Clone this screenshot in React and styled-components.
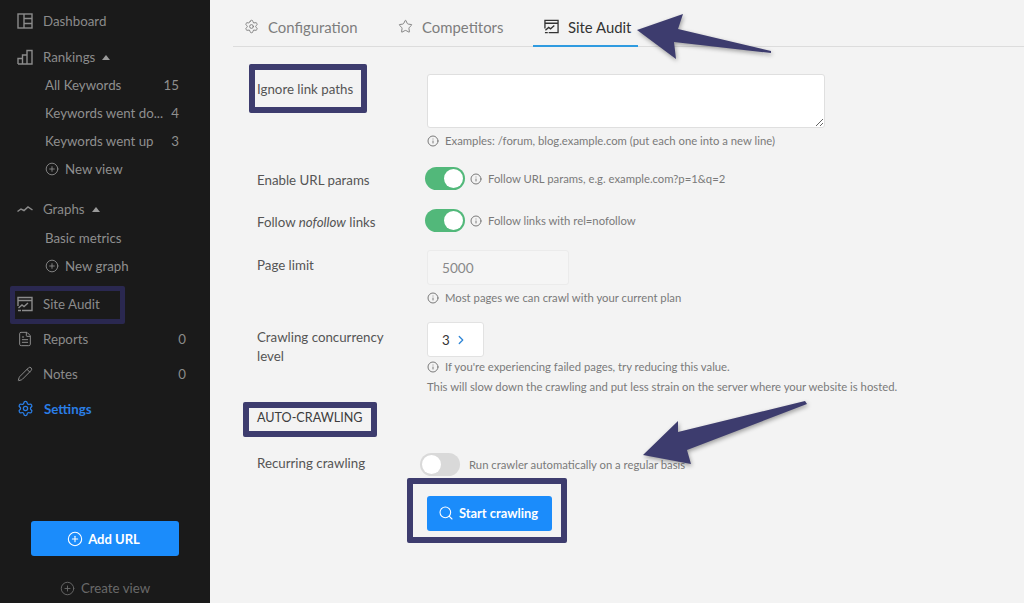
import React from "react";
import styled, { createGlobalStyle } from "styled-components";
import {
  ChevronRight,
  CirclePlus,
  FileText,
  Info,
  Pencil,
  Search,
  Settings,
  Star,
} from "lucide-react";

const Global = createGlobalStyle`
  html, body {
    margin: 0;
    padding: 0;
    background: #f3f3f3;
  }
  * {
    box-sizing: border-box;
  }
`;

const Page = styled.div`
  display: flex;
  width: 1024px;
  height: 603px;
  overflow: hidden;
  position: relative;
  font-family: Lato, "Liberation Sans", sans-serif;
  font-size: 13.3px;
`;

const Sidebar = styled.aside`
  position: relative;
  flex: 0 0 210px;
  width: 210px;
  min-width: 0;
  display: flex;
  flex-direction: column;
  padding: 3px 0 0 17px;
  background: #1a1a1a;
  color: #8b8b8b;
`;

const NavItem = styled.div`
  display: flex;
  align-items: center;
  height: ${(p) => p.$height || 35}px;
  margin-top: ${(p) => p.$top || 0}px;
  padding-right: 24px;
  gap: 10px;
  color: ${(p) => (p.$active ? "#2a7ee6" : "#8b8b8b")};
  font-weight: ${(p) => (p.$active ? 700 : 400)};
  svg {
    flex: none;
  }
`;

const Caret = styled.span`
  width: 0;
  height: 0;
  margin-left: -3px;
  border-left: 4px solid transparent;
  border-right: 4px solid transparent;
  border-bottom: 5px solid #9a9a9a;
`;

const SubItem = styled.div`
  display: flex;
  align-items: center;
  height: 28px;
  margin-left: 28px;
  padding-right: 31px;
  gap: 6px;
  color: #8f8f8f;
`;

const SubLabel = styled.span`
  flex: 1;
  white-space: nowrap;
`;

const Count = styled.span`
  margin-left: auto;
`;

const AddButton = styled.button`
  display: flex;
  align-items: center;
  justify-content: center;
  gap: 5px;
  width: 148px;
  height: 35px;
  margin: auto 0 0 14px;
  padding: 0 3px 0 0;
  border: 0;
  border-radius: 3px;
  background: #1b8cfb;
  color: #fff;
  font: 700 13px Lato, "Liberation Sans", sans-serif;
`;

const CreateView = styled.div`
  display: flex;
  align-items: center;
  justify-content: center;
  gap: 6px;
  width: 148px;
  height: 18px;
  margin: 23px 0 6px 14px;
  color: #696969;
`;

const Main = styled.main`
  position: relative;
  flex: 1;
  min-width: 0;
  background: #f3f3f3;
  color: #555;
`;

const Tabs = styled.nav`
  display: flex;
  gap: 22.5px;
  height: 47px;
  margin-left: 23px;
  border-bottom: 1px solid #dcdcdc;
`;

const Tab = styled.div`
  display: flex;
  align-items: center;
  gap: 9px;
  height: 47px;
  padding: 8px 7px 0 11px;
  font-size: 14.9px;
  color: ${(p) => (p.$active ? "#333" : "#7d7d7d")};
  border-bottom: 2px solid ${(p) => (p.$active ? "#2f9be0" : "transparent")};
`;

const Form = styled.form`
  display: flex;
  flex-direction: column;
  padding-left: 47px;
`;

const Row = styled.div`
  display: grid;
  grid-template-columns: 170px 1fr;
  margin-top: ${(p) => p.$top || 0}px;
`;

const Label = styled.label`
  padding-top: ${(p) => p.$pad || 0}px;
  line-height: 19px;
  color: #555;
`;

const Field = styled.div`
  display: flex;
  flex-direction: ${(p) => (p.$inline ? "row" : "column")};
  align-items: ${(p) => (p.$inline ? "center" : "flex-start")};
`;

const TextArea = styled.textarea`
  width: 398px;
  height: 54px;
  border: 1px solid #dfdfdf;
  border-radius: 3px;
  background: #fff;
`;

const Hint = styled.div`
  display: flex;
  align-items: center;
  gap: 6px;
  margin-top: ${(p) => p.$top || 0}px;
  margin-left: ${(p) => p.$left || 0}px;
  line-height: ${(p) => p.$line || 16}px;
  font-size: 11.3px;
  color: #7a7a7a;
  white-space: nowrap;
  svg {
    flex: none;
  }
`;

const Toggle = styled.span`
  position: relative;
  flex: none;
  width: 40px;
  height: 23px;
  margin-left: ${(p) => p.$shift}px;
  border-radius: 12px;
  background: ${(p) => (p.$on ? "#52b87a" : "#d9d9d9")};
  &::after {
    content: "";
    position: absolute;
    top: 2px;
    ${(p) => (p.$on ? "right: 2px;" : "left: 2px;")}
    width: 19px;
    height: 19px;
    border-radius: 50%;
    background: #fff;
  }
`;

const LimitInput = styled.div`
  display: flex;
  align-items: center;
  width: 142px;
  height: 35px;
  padding-left: 14px;
  border: 1px solid #ebebeb;
  border-radius: 3px;
  background: #f5f5f5;
  color: #888;
  font-size: 13.6px;
`;

const Stepper = styled.div`
  display: flex;
  align-items: center;
  gap: 4px;
  width: 57px;
  height: 35px;
  padding-left: 14px;
  border: 1px solid #e2e2e2;
  border-radius: 3px;
  background: #fff;
  color: #333;
`;

const Heading = styled.h4`
  margin: 11px 0 0;
  font-size: 12.6px;
  font-weight: 400;
  line-height: 20px;
  color: #3d3d3d;
`;

const StartButton = styled.button`
  display: flex;
  align-items: center;
  justify-content: center;
  gap: 5px;
  grid-column: 2;
  width: 125px;
  height: 35px;
  padding: 0 3px 2px 0;
  border: 0;
  border-radius: 3px;
  background: #1b8cfb;
  color: #fff;
  font: 700 12.9px Lato, "Liberation Sans", sans-serif;
`;

/* annotation layer: drawn over the page, as in the marked up screenshot */
const Mark = styled.div`
  position: absolute;
  left: ${(p) => p.$x}px;
  top: ${(p) => p.$y}px;
  width: ${(p) => p.$w}px;
  height: ${(p) => p.$h}px;
  border: ${(p) => p.$b || 6}px solid ${(p) => p.$color || "#3d3c6e"};
  border-radius: 2px;
  pointer-events: none;
`;

const Arrow = styled.svg`
  position: absolute;
  left: 0;
  top: 0;
  width: 1024px;
  height: 603px;
  pointer-events: none;
  filter: drop-shadow(1px 2px 2px rgba(0, 0, 0, 0.35));
`;

const Dashboard = () => (
  <svg width="16" height="16" viewBox="0 0 16 16" fill="none" stroke="currentColor" strokeWidth="1.4">
    <rect x="1" y="1" width="14" height="14" />
    <path d="M7 1v14M7 5.5h8M7 10.5h8" />
  </svg>
);

const Bars = () => (
  <svg width="16" height="16" viewBox="0 0 16 16" fill="none" stroke="currentColor" strokeWidth="1.4">
    <path d="M1 15V9.5h4.5V15M5.5 15V6H10v9M10 15V1.5h5V15H1" />
  </svg>
);

const Trend = () => (
  <svg width="16" height="16" viewBox="0 0 16 16" fill="none" stroke="currentColor" strokeWidth="1.5">
    <path d="M0.5 10.5 4 8l3 1.5L11 6l4.5 3" />
  </svg>
);

const Audit = ({ size = 16 }) => (
  <svg width={size} height={size} viewBox="0 0 16 16" fill="none" stroke="currentColor" strokeWidth="1.4">
    <path d="M1 10V1.5h14v13H5M1 4.5h14" />
    <path d="M1 14.5h3M1.5 12 5 9l2 1.5L11 7" />
  </svg>
);

export default function App() {
  return (
    <Page>
      <Global />
      <Sidebar>
        <NavItem>
          <Dashboard />
          Dashboard
        </NavItem>
        <NavItem $height={28} $top={5}>
          <Bars />
          Rankings
          <Caret />
        </NavItem>
        <SubItem>
          <SubLabel>All Keywords</SubLabel>
          <Count>15</Count>
        </SubItem>
        <SubItem>
          <SubLabel>Keywords went do...</SubLabel>
          <Count>4</Count>
        </SubItem>
        <SubItem>
          <SubLabel>Keywords went up</SubLabel>
          <Count>3</Count>
        </SubItem>
        <SubItem>
          <CirclePlus size={14} strokeWidth={1.5} />
          <SubLabel>New view</SubLabel>
        </SubItem>
        <NavItem $height={30} $top={11}>
          <Trend />
          Graphs
          <Caret />
        </NavItem>
        <SubItem>
          <SubLabel>Basic metrics</SubLabel>
        </SubItem>
        <SubItem>
          <CirclePlus size={14} strokeWidth={1.5} />
          <SubLabel>New graph</SubLabel>
        </SubItem>
        <NavItem $top={6}>
          <Audit />
          Site Audit
        </NavItem>
        <NavItem>
          <FileText size={16} strokeWidth={1.5} />
          Reports
          <Count>0</Count>
        </NavItem>
        <NavItem>
          <Pencil size={16} strokeWidth={1.5} />
          Notes
          <Count>0</Count>
        </NavItem>
        <NavItem $active>
          <Settings size={17} strokeWidth={1.8} />
          Settings
        </NavItem>
        <AddButton>
          <CirclePlus size={16} strokeWidth={1.6} />
          Add URL
        </AddButton>
        <CreateView>
          <CirclePlus size={15} strokeWidth={1.5} />
          Create view
        </CreateView>
        <Mark $x={10} $y={286} $w={115} $h={38} $b={5} $color="#2a2850" />
      </Sidebar>
      <Main>
        <Tabs>
          <Tab>
            <Settings size={15} strokeWidth={1.5} />
            Configuration
          </Tab>
          <Tab>
            <Star size={15} strokeWidth={1.5} />
            Competitors
          </Tab>
          <Tab $active>
            <Audit size={15} />
            Site Audit
          </Tab>
        </Tabs>
        <Form>
          <Row $top={27}>
            <Label $pad={6}>Ignore link paths</Label>
            <Field>
              <TextArea />
              <Hint $top={5}>
                <Info size={12} />
                Examples: /forum, blog.example.com (put each one into a new line)
              </Hint>
            </Field>
          </Row>
          <Row $top={18}>
            <Label $pad={4}>Enable URL params</Label>
            <Field $inline>
              <Toggle $on $shift={-2} />
              <Hint $left={5}>
                <Info size={12} />
                Follow URL params, e.g. example.com?p=1&amp;q=2
              </Hint>
            </Field>
          </Row>
          <Row $top={19}>
            <Label $pad={4}>
              Follow <em>nofollow</em> links
            </Label>
            <Field $inline>
              <Toggle $on $shift={-2} />
              <Hint $left={5}>
                <Info size={12} />
                Follow links with rel=nofollow
              </Hint>
            </Field>
          </Row>
          <Row $top={18}>
            <Label $pad={6}>Page limit</Label>
            <Field>
              <LimitInput>5000</LimitInput>
              <Hint $top={5}>
                <Info size={12} />
                Most pages we can crawl with your current plan
              </Hint>
            </Field>
          </Row>
          <Row $top={16}>
            <Label $pad={6}>
              Crawling concurrency
              <br />
              level
            </Label>
            <Field>
              <Stepper>
                3
                <ChevronRight size={14} color="#2f86d6" strokeWidth={2.2} />
              </Stepper>
              <Hint $line={20}>
                <Info size={12} />
                If you're experiencing failed pages, try reducing this value.
              </Hint>
              <Hint $line={20}>
                This will slow down the crawling and put less strain on the server where your website is hosted.
              </Hint>
            </Field>
          </Row>
          <Heading>AUTO-CRAWLING</Heading>
          <Row $top={25}>
            <Label $pad={1}>Recurring crawling</Label>
            <Field $inline>
              <Toggle $shift={-7} />
              <Hint $left={9}>Run crawler automatically on a regular basis</Hint>
            </Field>
          </Row>
          <Row $top={20}>
            <StartButton>
              <Search size={16} strokeWidth={1.6} />
              Start crawling
            </StartButton>
          </Row>
        </Form>
      </Main>
      <Mark $x={249} $y={64} $w={118} $h={49} />
      <Mark $x={243} $y={402} $w={134} $h={35} />
      <Mark $x={407} $y={478} $w={160} $h={65} />
      <Arrow viewBox="0 0 1024 603">
        <polygon points="637,30 683,14 678,29 771,51 771,53 674,42 676,59" fill="#3d3c6e" />
        <polygon points="643,455 678,421 678,432 805,401 807,404 687,450 691,464" fill="#3d3c6e" />
      </Arrow>
    </Page>
  );
}
